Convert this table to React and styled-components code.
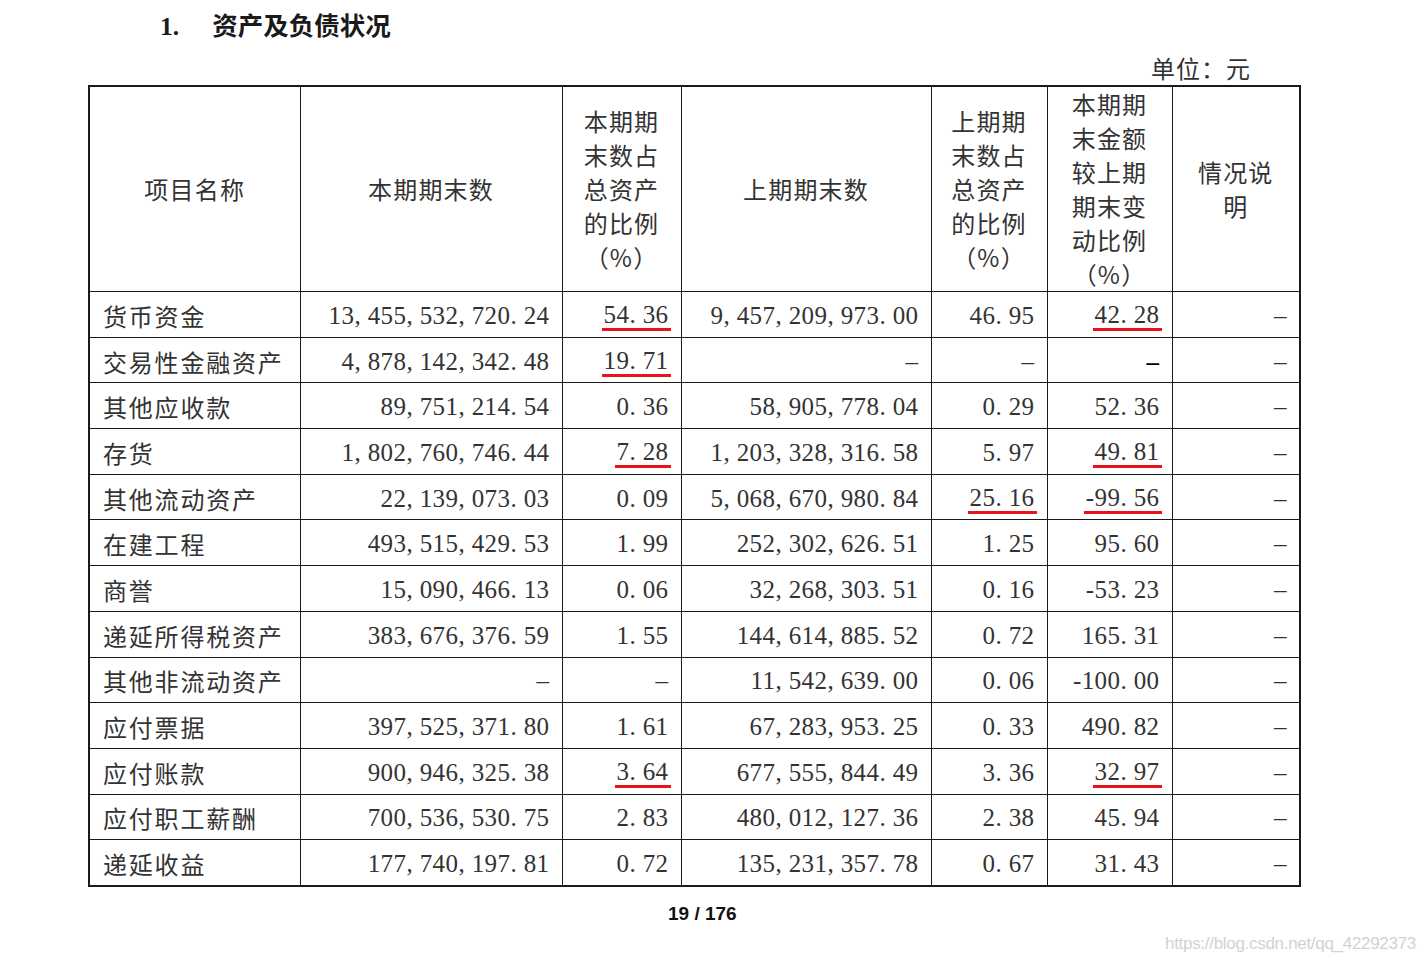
import React from "react";
import styled, { createGlobalStyle } from "styled-components";

const GlobalStyle = createGlobalStyle`
  html, body {
    margin: 0;
    padding: 0;
    background: #fff;
  }
  body {
    font-family: "Liberation Serif", "Noto Sans CJK SC", serif;
    color: #2a2a2a;
  }
`;

const Page = styled.div`
  width: 1426px;
  height: 962px;
  position: relative;
  overflow: hidden;
  background: #fff;
`;

const Title = styled.h1`
  display: flex;
  gap: 33px;
  box-sizing: border-box;
  margin: 0;
  padding: 10px 0 0 160px;
  height: 50px;
  font-family: "Liberation Serif", "Noto Sans CJK SC", serif;
  font-size: 25.5px;
  font-weight: 700;
  line-height: 34px;
  color: #1a1a1a;
`;

const Unit = styled.div`
  width: 1251px;
  text-align: right;
  height: 35px;
  line-height: 36px;
  font-family: "Noto Sans CJK SC", sans-serif;
  font-size: 24px;
  letter-spacing: 1px;
  color: #333;
`;

const Table = styled.table`
  margin-left: 88px;
  border-collapse: collapse;
  table-layout: fixed;
  width: 1211px;
  border: 2px solid #1a1a1a;
`;

const HeadCell = styled.th`
  height: 199px;
  padding: 0 4px;
  border: 1.5px solid #1a1a1a;
  font-family: "Noto Sans CJK SC", sans-serif;
  font-weight: 400;
  font-size: 24px;
  letter-spacing: 1.2px;
  line-height: 34px;
  color: #333;
  text-align: center;
  vertical-align: middle;
  white-space: pre-line;
`;

const Cell = styled.td`
  height: 41.7px;
  padding: ${(p) => (p.$name ? "3px 0 0 13px" : "3px 12px 0 0")};
  border: 1.5px solid #1a1a1a;
  font-family: ${(p) =>
    p.$name
      ? `"Noto Sans CJK SC", sans-serif`
      : `"Liberation Serif", serif`};
  font-size: ${(p) => (p.$name ? "24px" : "25px")};
  letter-spacing: ${(p) => (p.$name ? "1.8px" : "0.4px")};
  line-height: 30px;
  color: #333;
  text-align: ${(p) => (p.$name ? "left" : "right")};
  vertical-align: middle;
  white-space: nowrap;
`;

const Marked = styled.span`
  display: inline-block;
  padding: 0 2px;
  margin-right: -2px;
  line-height: 27px;
  border-bottom: 3px solid #e8141c;
`;

const Dash = styled.span`
  font-weight: ${(p) => (p.$bold ? 700 : 400)};
  color: ${(p) => (p.$bold ? "#000" : "#333")};
`;

const PageNo = styled.div`
  padding: 14px 0 0 668px;
  font-family: "Liberation Sans", "Noto Sans", sans-serif;
  font-size: 19px;
  font-weight: 700;
  color: #111;
  line-height: 26px;
`;

const Watermark = styled.div`
  position: absolute;
  right: 10px;
  bottom: 8px;
  font-family: "Liberation Sans Narrow", "Liberation Sans", sans-serif;
  font-size: 17px;
  color: #d2d2d2;
  letter-spacing: -0.3px;
`;

const widths = [211, 262, 119, 250, 116, 125, 128];

const headers = [
  "项目名称",
  "本期期末数",
  "本期期\n末数占\n总资产\n的比例\n（%）",
  "上期期末数",
  "上期期\n末数占\n总资产\n的比例\n（%）",
  "本期期\n末金额\n较上期\n期末变\n动比例\n（%）",
  "情况说\n明",
];

const u = (v) => ({ v, u: true });

const rows = [
  ["货币资金", "13, 455, 532, 720. 24", u("54. 36"), "9, 457, 209, 973. 00", "46. 95", u("42. 28"), "-"],
  ["交易性金融资产", "4, 878, 142, 342. 48", u("19. 71"), "-", "-", { v: "-", b: true }, "-"],
  ["其他应收款", "89, 751, 214. 54", "0. 36", "58, 905, 778. 04", "0. 29", "52. 36", "-"],
  ["存货", "1, 802, 760, 746. 44", u("7. 28"), "1, 203, 328, 316. 58", "5. 97", u("49. 81"), "-"],
  ["其他流动资产", "22, 139, 073. 03", "0. 09", "5, 068, 670, 980. 84", u("25. 16"), u("-99. 56"), "-"],
  ["在建工程", "493, 515, 429. 53", "1. 99", "252, 302, 626. 51", "1. 25", "95. 60", "-"],
  ["商誉", "15, 090, 466. 13", "0. 06", "32, 268, 303. 51", "0. 16", "-53. 23", "-"],
  ["递延所得税资产", "383, 676, 376. 59", "1. 55", "144, 614, 885. 52", "0. 72", "165. 31", "-"],
  ["其他非流动资产", "-", "-", "11, 542, 639. 00", "0. 06", "-100. 00", "-"],
  ["应付票据", "397, 525, 371. 80", "1. 61", "67, 283, 953. 25", "0. 33", "490. 82", "-"],
  ["应付账款", "900, 946, 325. 38", u("3. 64"), "677, 555, 844. 49", "3. 36", u("32. 97"), "-"],
  ["应付职工薪酬", "700, 536, 530. 75", "2. 83", "480, 012, 127. 36", "2. 38", "45. 94", "-"],
  ["递延收益", "177, 740, 197. 81", "0. 72", "135, 231, 357. 78", "0. 67", "31. 43", "-"],
];

const renderValue = (c) => {
  const item = typeof c === "string" ? { v: c } : c;
  if (item.v === "-") return <Dash $bold={item.b}>–</Dash>;
  if (item.u) return <Marked>{item.v}</Marked>;
  return item.v;
};

export default function App() {
  return (
    <Page>
      <GlobalStyle />
      <Title>
        <span>1.</span>
        <span>资产及负债状况</span>
      </Title>
      <Unit>单位：元</Unit>
      <Table>
        <colgroup>
          {widths.map((w, i) => (
            <col key={i} style={{ width: w }} />
          ))}
        </colgroup>
        <thead>
          <tr>
            {headers.map((h, i) => (
              <HeadCell key={i}>{h}</HeadCell>
            ))}
          </tr>
        </thead>
        <tbody>
          {rows.map((r, i) => (
            <tr key={i}>
              {r.map((c, j) => (
                <Cell key={j} $name={j === 0}>
                  {j === 0 ? c : renderValue(c)}
                </Cell>
              ))}
            </tr>
          ))}
        </tbody>
      </Table>
      <PageNo>19 / 176</PageNo>
      <Watermark>https://blog.csdn.net/qq_42292373</Watermark>
    </Page>
  );
}
